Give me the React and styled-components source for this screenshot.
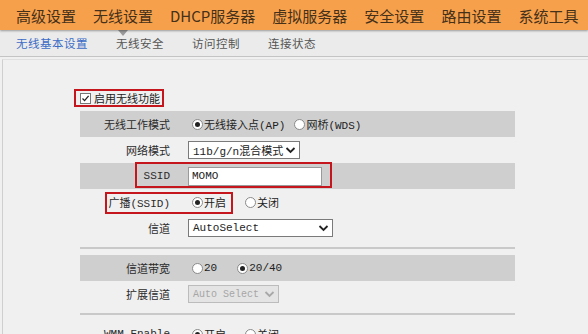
import React from "react";
import styled, { createGlobalStyle } from "styled-components";

const GlobalStyle = createGlobalStyle`
  html, body {
    margin: 0;
    padding: 0;
    background: #f0f0f0;
  }
  body {
    width: 588px;
    height: 334px;
    overflow: hidden;
    font-family: "Noto Sans CJK SC", "Liberation Sans", sans-serif;
  }
`;

const mainTabs = ["高级设置", "无线设置", "DHCP服务器", "虚拟服务器", "安全设置", "路由设置", "系统工具"];
const subTabs = ["无线基本设置", "无线安全", "访问控制", "连接状态"];

export default function App() {
  return (
    <Page>
      <GlobalStyle />
      <TopNav>
        {mainTabs.map((t) => (
          <TopItem key={t}>{t}</TopItem>
        ))}
      </TopNav>
      <SubNav>
        <Pointer />
        {subTabs.map((t, i) => (
          <SubItem key={t} active={i === 0}>
            {t}
          </SubItem>
        ))}
      </SubNav>
      <Panel>
        <Form>
          <CheckLine>
            <CheckLabel>
              <CheckBox>
                <svg width="9" height="9" viewBox="0 0 9 9">
                  <path d="M1.5 4.5 L3.6 6.6 L7.6 1.8" fill="none" stroke="#222" strokeWidth="1.3" />
                </svg>
              </CheckBox>
              启用无线功能
            </CheckLabel>
          </CheckLine>

          <Row shaded>
            <Label>无线工作模式</Label>
            <Value>
              <Radio checked label="无线接入点(AP)" />
              <Radio label="网桥(WDS)" />
            </Value>
          </Row>
          <Row>
            <Label>网络模式</Label>
            <Value>
              <Select width={112}>11b/g/n混合模式</Select>
            </Value>
          </Row>
          <Row shaded>
            <Highlight left={55} width={197} top={-1} height={26} />
            <Label>SSID</Label>
            <Value>
              <TextInput>MOMO</TextInput>
            </Value>
          </Row>
          <Row>
            <Highlight left={25} width={128} top={3} height={22} />
            <Label>广播(SSID)</Label>
            <Value>
              <Radio checked label="开启" trail={10} />
              <Radio label="关闭" />
            </Value>
          </Row>
          <Row>
            <Label>信道</Label>
            <Value>
              <Select width={145}>AutoSelect</Select>
            </Value>
          </Row>

          <Divider />

          <Row shaded>
            <Label>信道带宽</Label>
            <Value>
              <Radio label="20" trail={11} />
              <Radio checked label="20/40" />
            </Value>
          </Row>
          <Row>
            <Label>扩展信道</Label>
            <Value>
              <Select width={91} disabled>
                Auto Select
              </Select>
            </Value>
          </Row>

          <Divider />

          <Row>
            <Label>WMM Enable</Label>
            <Value>
              <Radio checked label="开启" trail={10} />
              <Radio label="关闭" />
            </Value>
          </Row>
        </Form>
      </Panel>
    </Page>
  );
}

function Radio({ checked, label, trail = 0 }) {
  return (
    <RadioWrap trail={trail}>
      <RadioDot checked={checked} />
      <span>{label}</span>
    </RadioWrap>
  );
}

function Select({ width, disabled, children }) {
  return (
    <SelectBox width={width} disabled={disabled}>
      <SelectText disabled={disabled}>{children}</SelectText>
      <svg width="11" height="8" viewBox="0 0 11 8">
        <path
          d="M1.5 2 L5.5 6 L9.5 2"
          fill="none"
          stroke={disabled ? "#a8a8a8" : "#222"}
          strokeWidth="1.8"
        />
      </svg>
    </SelectBox>
  );
}

const Page = styled.div`
  width: 588px;
  height: 334px;
  overflow: hidden;
  background: #f0f0f0;
`;

const TopNav = styled.div`
  height: 30px;
  display: flex;
  align-items: center;
  gap: 17px;
  padding-left: 16px;
  background: #f7a04b;
  box-shadow: 0 1px 2px rgba(0, 0, 0, 0.35);
  position: relative;
  z-index: 1;
`;

const TopItem = styled.span`
  font-size: 15px;
  color: #45301a;
  white-space: nowrap;
`;

const SubNav = styled.div`
  position: relative;
  height: 26px;
  display: flex;
  align-items: center;
  gap: 28px;
  padding-left: 16px;
  background: #ebebeb;
  border-bottom: 1px solid #c4c4c4;
`;

const Pointer = styled.span`
  position: absolute;
  left: 118px;
  top: 0;
  width: 0;
  height: 0;
  border-left: 5px solid transparent;
  border-right: 5px solid transparent;
  border-top: 6px solid #9a9a9a;
`;

const SubItem = styled.span`
  font-size: 11.5px;
  letter-spacing: 0.5px;
  color: ${(p) => (p.active ? "#3b6cc6" : "#555")};
`;

const Panel = styled.div`
  margin-top: 2px;
  margin-left: 2px;
  height: 280px;
  background: #f0f0f0;
  border-left: 1px solid #cfcfcf;
  border-top: 1px solid #e0e0e0;
  padding-top: 29px;
`;

const Form = styled.div`
  width: 435px;
  margin-left: 77px;
  font-size: 11px;
  color: #222;
`;

const CheckLine = styled.div`
  margin-left: -6px;
  height: 22px;
`;

const CheckLabel = styled.span`
  display: inline-flex;
  align-items: center;
  gap: 3px;
  height: 14px;
  padding: 0 2px 0 4px;
  border: 2px solid #c4161c;
  font-size: 11px;
`;

const CheckBox = styled.span`
  width: 9px;
  height: 9px;
  border: 1px solid #777;
  background: #fff;
  display: inline-flex;
  align-items: center;
  justify-content: center;
`;

const Row = styled.div`
  position: relative;
  height: 26px;
  display: grid;
  grid-template-columns: 90px 1fr;
  column-gap: 18px;
  align-items: center;
  background: ${(p) => (p.shaded ? "#cfcfcf" : "transparent")};
`;

const Divider = styled.div`
  margin: 6px 0;
  border-top: 2px solid #c9c9c9;
`;

const Label = styled.span`
  text-align: right;
  font-family: "Liberation Mono", "Noto Sans CJK SC", monospace;
  font-size: 11px;
  color: #2a2a2a;
  white-space: nowrap;
`;

const Value = styled.div`
  display: flex;
  align-items: center;
  gap: 5px;
`;

const Highlight = styled.span`
  position: absolute;
  left: ${(p) => p.left}px;
  top: ${(p) => p.top}px;
  width: ${(p) => p.width}px;
  height: ${(p) => p.height}px;
  border: 2px solid #c4161c;
  box-sizing: border-box;
  pointer-events: none;
`;

const RadioWrap = styled.span`
  display: inline-flex;
  align-items: center;
  gap: 1px;
  padding-left: 4px;
  margin-right: ${(p) => p.trail}px;
  font-family: "Liberation Mono", "Noto Sans CJK SC", monospace;
  font-size: 11px;
  white-space: nowrap;
`;

const RadioDot = styled.span`
  width: 9px;
  height: 9px;
  border-radius: 50%;
  border: 1px solid #8a8a8a;
  background: #fff;
  display: inline-flex;
  align-items: center;
  justify-content: center;
  &::after {
    content: "";
    width: 5px;
    height: 5px;
    border-radius: 50%;
    background: ${(p) => (p.checked ? "#222" : "transparent")};
  }
`;

const SelectBox = styled.div`
  box-sizing: border-box;
  width: ${(p) => p.width}px;
  height: 18px;
  display: flex;
  align-items: center;
  justify-content: space-between;
  padding: 0 3px 0 4px;
  background: ${(p) => (p.disabled ? "#e4e4e4" : "#fff")};
  border: 1px solid ${(p) => (p.disabled ? "#bcbcbc" : "#7a7a7a")};
  color: ${(p) => (p.disabled ? "#a6a6a6" : "#222")};
`;

const SelectText = styled.span`
  font-family: "Liberation Mono", "Noto Sans CJK SC", monospace;
  font-size: ${(p) => (p.disabled ? "10px" : "11px")};
  white-space: nowrap;
`;

const TextInput = styled.div`
  box-sizing: border-box;
  width: 134px;
  height: 19px;
  display: flex;
  align-items: center;
  padding-left: 3px;
  background: #fff;
  border: 1px solid #9a9a9a;
  font-family: "Liberation Mono", monospace;
  font-size: 11px;
`;
